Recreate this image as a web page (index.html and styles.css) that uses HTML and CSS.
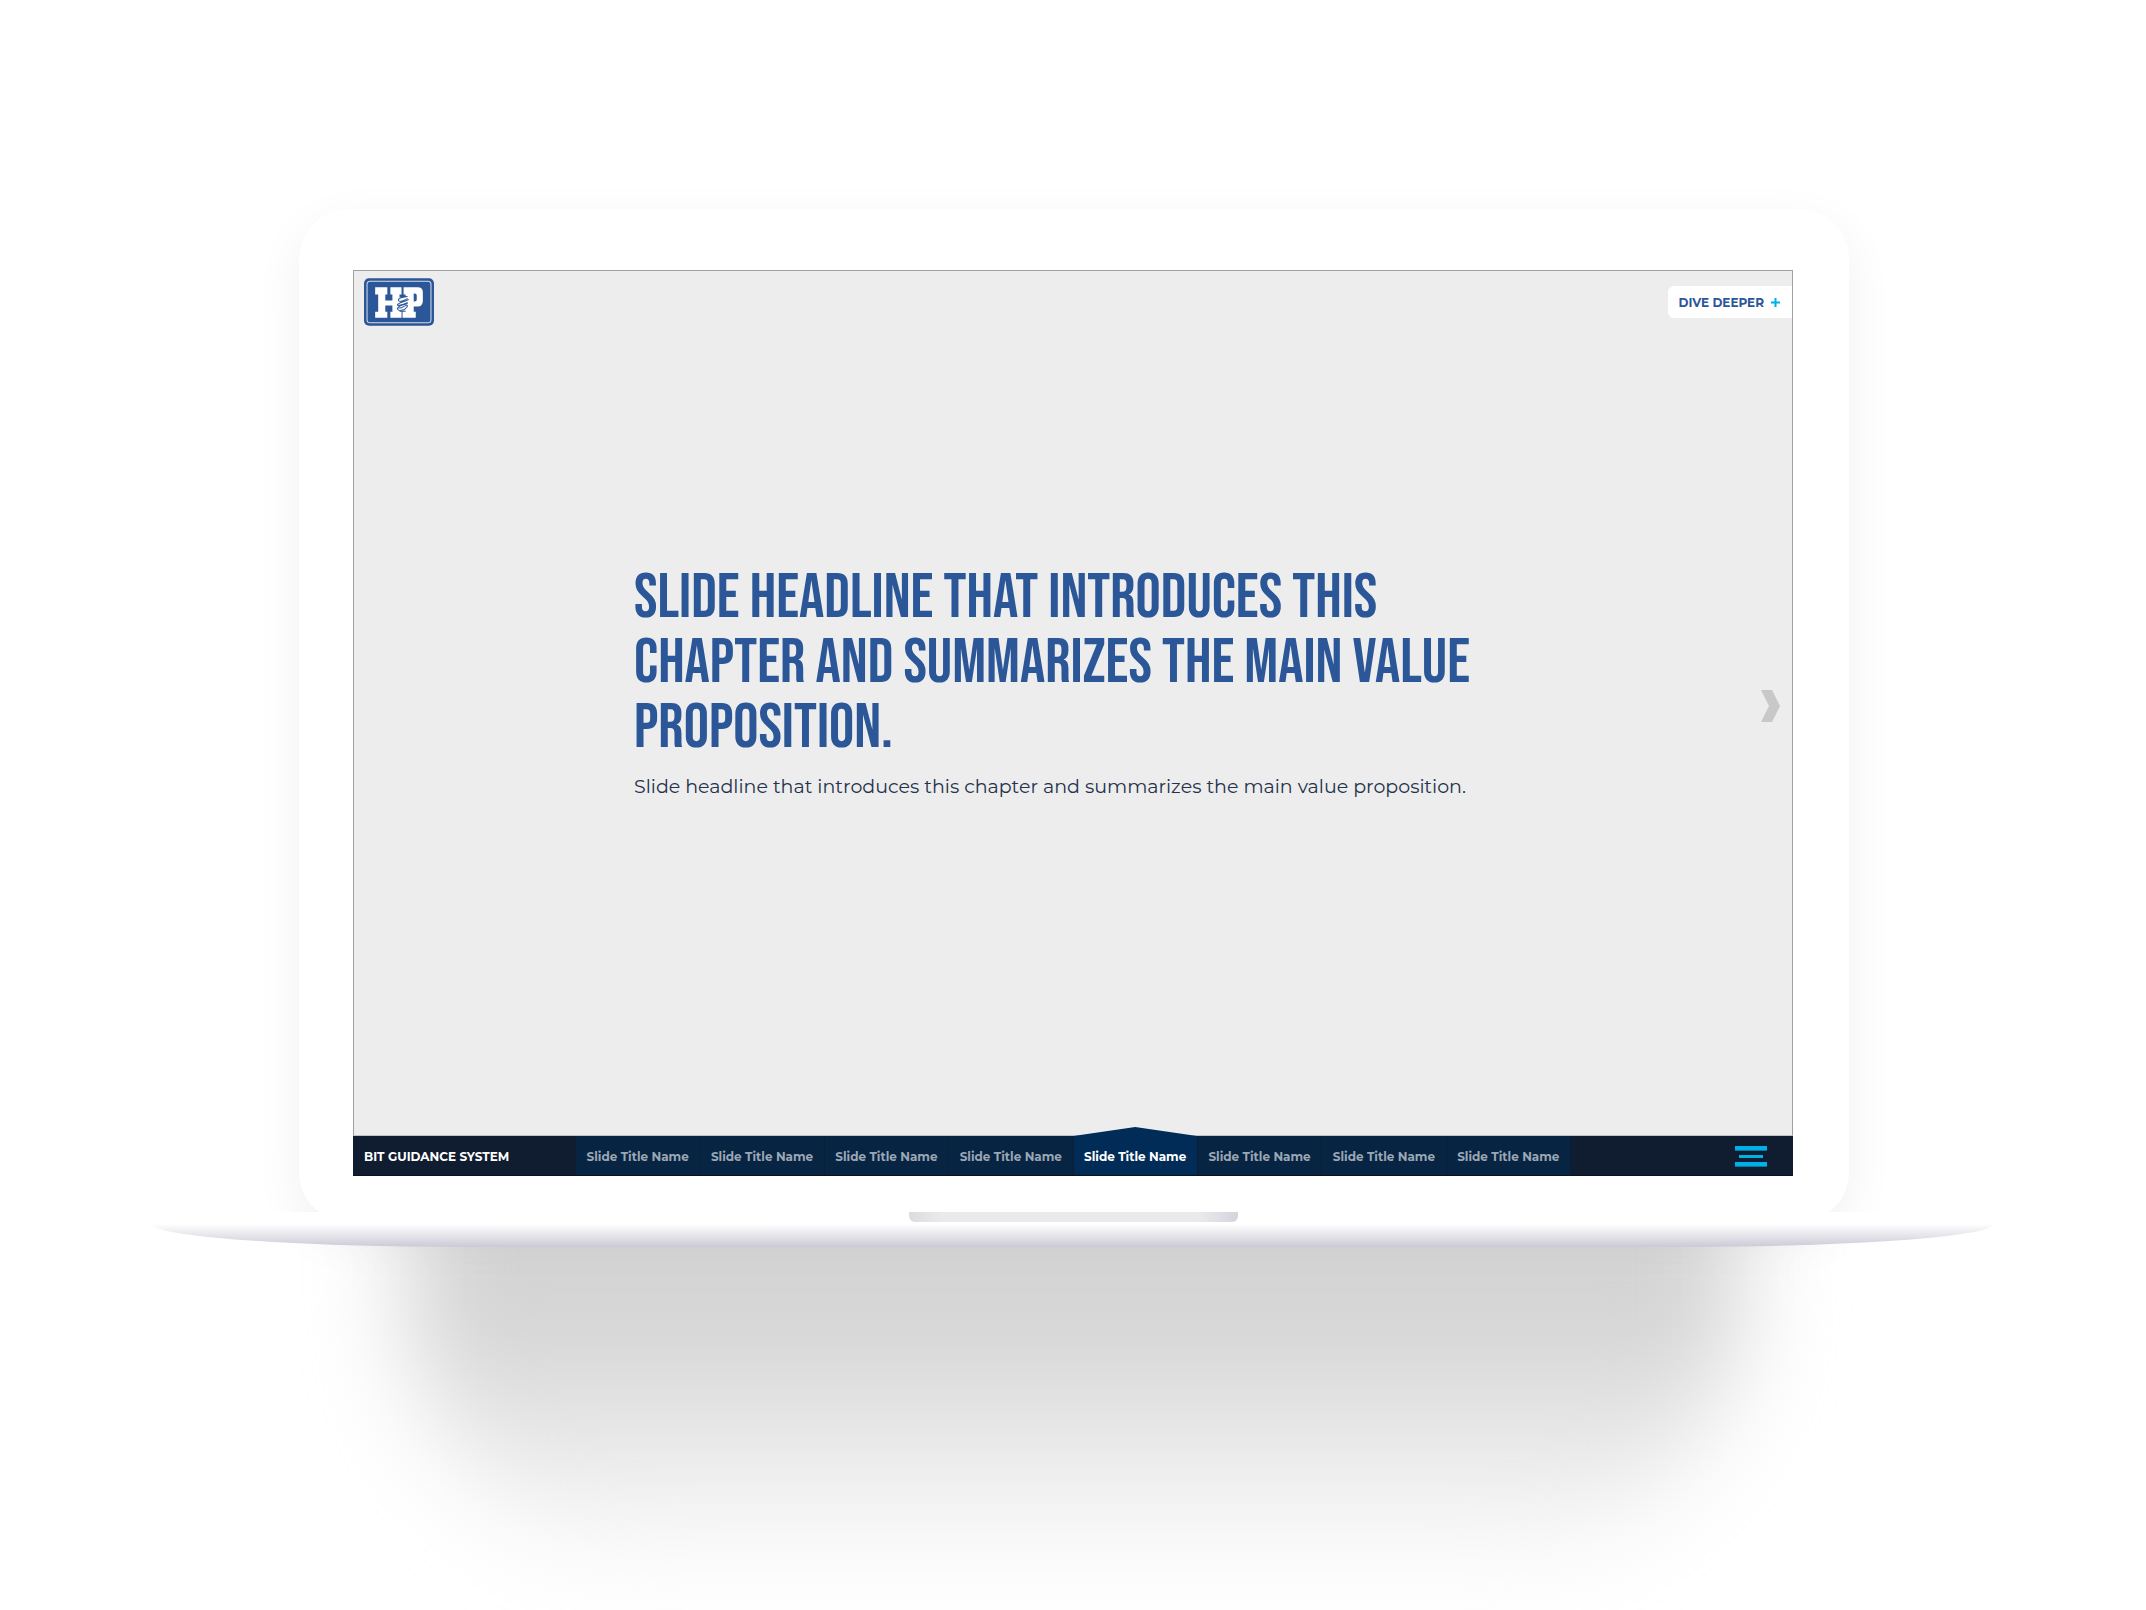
FILE: index.html
```html
<!DOCTYPE html>
<html lang="en">
<head>
<meta charset="utf-8">
<meta name="viewport" content="width=device-width, initial-scale=1">
<title>Bit Guidance System</title>
<link rel="stylesheet" href="styles.css">
</head>
<body>
<div class="laptop">
  <div class="lid">
    <div class="screen">
      <main class="stage">
        <header class="topbar">
          <a class="logo" href="#" aria-label="H&amp;P home">
            <svg viewBox="0 0 69 47" width="70" height="48" aria-hidden="true">
              <rect width="69" height="47" rx="5" fill="#2b5697"/>
              <rect x="3" y="3" width="63" height="41" rx="3" fill="none" stroke="#d5deeb" stroke-width="1"/>
              <path fill="#fff" d="M11 9h12v7h-2v6h7v-6h-2V9h11v7h-2v17h2v6H26v-6h2v-6h-7v6h2v6H11v-6h3V16h-3z"/>
              <path fill="#fff" fill-rule="evenodd" d="M39 9h14q5 0 5 5v8q0 6-5 6h-4v5h2v6H38v-6h3V16h-2zM49 15v8h1q2 0 2-2v-4q0-2-2-2z"/>
              <path fill="#fff" d="M34 19h9v13h-9z"/>
              <path fill="none" stroke="#2b5697" stroke-width="1" d="M43 18c-4 0-10 2-9 4s6 0 9-2M44 21c-3 2-10 3-11 5s6 0 10-2M43 25c-4 1-10 2-10 5s7 2 9-1 0-3-3-1-4 2-5 1"/>
            </svg>
          </a>
          <button class="dive" type="button">DIVE DEEPER
            <svg viewBox="0 0 9 9" width="9" height="9" aria-hidden="true"><path d="M4.5 0v9M0 4.5h9" stroke="#00b1e7" stroke-width="2"/></svg>
          </button>
        </header>
        <section class="intro">
          <h1 class="headline">SLIDE HEADLINE THAT INTRODUCES THIS<br>CHAPTER AND SUMMARIZES THE MAIN VALUE<br>PROPOSITION.</h1>
          <p class="summary">Slide headline that introduces this chapter and summarizes the main value proposition.</p>
        </section>
        <button class="next" type="button" aria-label="Next slide">
          <svg viewBox="0 0 19 32" width="19" height="32" aria-hidden="true"><path d="M0 0h11l8 16-8 16H0l8-16z" fill="#c8c8c8"/></svg>
        </button>
      </main>
      <nav class="navbar" aria-label="Slides">
        <span class="chapter">BIT GUIDANCE SYSTEM</span>
        <div class="tabs">
          <a class="tab" href="#">Slide Title Name</a>
          <a class="tab" href="#">Slide Title Name</a>
          <a class="tab" href="#">Slide Title Name</a>
          <a class="tab" href="#">Slide Title Name</a>
          <a class="tab tab-active" href="#" aria-current="page">Slide Title Name</a>
          <a class="tab" href="#">Slide Title Name</a>
          <a class="tab" href="#">Slide Title Name</a>
          <a class="tab" href="#">Slide Title Name</a>
        </div>
        <button class="menu" type="button" aria-label="Menu">
          <svg viewBox="0 0 32 21" width="32" height="21" aria-hidden="true"><path fill="#00b1e7" d="M0 0h32v4H0zM4 9h24v3H4zM0 16h32v4H0z"/><path fill="#07779d" d="M0 4h32v1H0zM0 20h32v1H0z"/></svg>
        </button>
      </nav>
    </div>
  </div>
  <div class="base">
    <div class="notch"></div>
    <div class="edge"></div>
  </div>
</div>
</body>
</html>
```
FILE: styles.css
```css
* {
  box-sizing: border-box;
}

body {
  margin: 0;
  min-height: 100vh;
  overflow: hidden;
  background: #fff;
  font-family: Montserrat, Inter, sans-serif;
}

button {
  margin: 0;
  padding: 0;
  border: 0;
  background: none;
  font: inherit;
  cursor: pointer;
}

svg {
  display: block;
}

.laptop {
  position: relative;
  isolation: isolate;
  padding: 209px 152px 0;
}

/* soft floor shadow under the device */
.laptop::after {
  content: "";
  position: absolute;
  z-index: -1;
  top: 1170px;
  left: 19%;
  right: 19%;
  height: 410px;
  border-radius: 40px 40px 280px 280px;
  background: linear-gradient(#d3d3d3 34%, rgba(211, 211, 211, 0));
  filter: blur(48px);
}

.lid {
  margin: 0 145px 0 147px;
  padding: 61px 56px 46px 54px;
  border-radius: 50px;
  background: #fff;
  box-shadow: 0 16px 50px rgba(0, 0, 0, 0.06);
}

.stage {
  position: relative;
  display: flex;
  flex-direction: column;
  min-height: 866px;
  border: 1px solid #a0a0a0;
  border-bottom-color: #bcc3cb;
  background: #ededed;
}

.topbar {
  display: flex;
  align-items: center;
  justify-content: space-between;
  padding: 7px 0 0 10px;
}

.dive {
  display: flex;
  align-items: center;
  gap: 7px;
  height: 32px;
  padding: 0 12px 0 11px;
  border-radius: 6px 0 0 6px;
  background: #fff;
  color: #2b5697;
  font-size: 12px;
  font-weight: 700;
}

.intro {
  width: 100%;
  max-width: 878px;
  margin: 0 auto;
  padding-top: 240px;
}

.headline {
  margin: 0;
  color: #2b5697;
  font-family: "Bebas Neue", "Roboto Condensed", "Liberation Sans Narrow", sans-serif;
  font-size: 63px;
  font-weight: 400;
  line-height: 65px;
  white-space: nowrap;
}

.summary {
  margin: 10px 0 0;
  color: #24324c;
  font-size: 19px;
  line-height: 32px;
}

.next {
  position: absolute;
  top: 419px;
  right: 12px;
}

.navbar {
  display: flex;
  align-items: stretch;
  height: 40px;
  border-bottom: 1px solid #0a1222;
  background: #101d30;
}

.chapter {
  flex: 0 0 223px;
  padding-left: 11px;
  color: #fff;
  font-size: 12px;
  font-weight: 700;
  line-height: 42px;
}

.tabs {
  display: flex;
  flex: 0 1 995px;
}

.tab {
  position: relative;
  flex: 1;
  border-right: 1px solid #0b1e35;
  background: #072442;
  color: #9ba7b5;
  font-size: 12px;
  font-weight: 700;
  line-height: 42px;
  text-align: center;
  text-decoration: none;
  white-space: nowrap;
}

.tab-active {
  background: #002c57;
  color: #fff;
}

.tab-active::before {
  content: "";
  position: absolute;
  right: 0;
  bottom: 100%;
  left: 0;
  height: 9px;
  background: #002c57;
  clip-path: polygon(50% 0, 100% 100%, 0 100%);
}

.menu {
  align-self: center;
  margin: 2px 26px 0 auto;
}

.base {
  position: relative;
  margin-top: -10px;
  padding-top: 12px;
  background: linear-gradient(#fff, #fff) top / 100% 12px no-repeat;
}

.edge {
  height: 23px;
  border-radius: 0 0 320px 320px / 0 0 23px 23px;
  background: linear-gradient(#fff, #e3e2e9 55%, #cbc9d6);
}

.notch {
  width: 329px;
  height: 10px;
  margin: -12px auto 2px;
  border-radius: 0 0 6px 6px;
  background: linear-gradient(90deg, #dcdcde, #eaeaec 10%, #eaeaec 88%, #d5d4dd);
}
```
